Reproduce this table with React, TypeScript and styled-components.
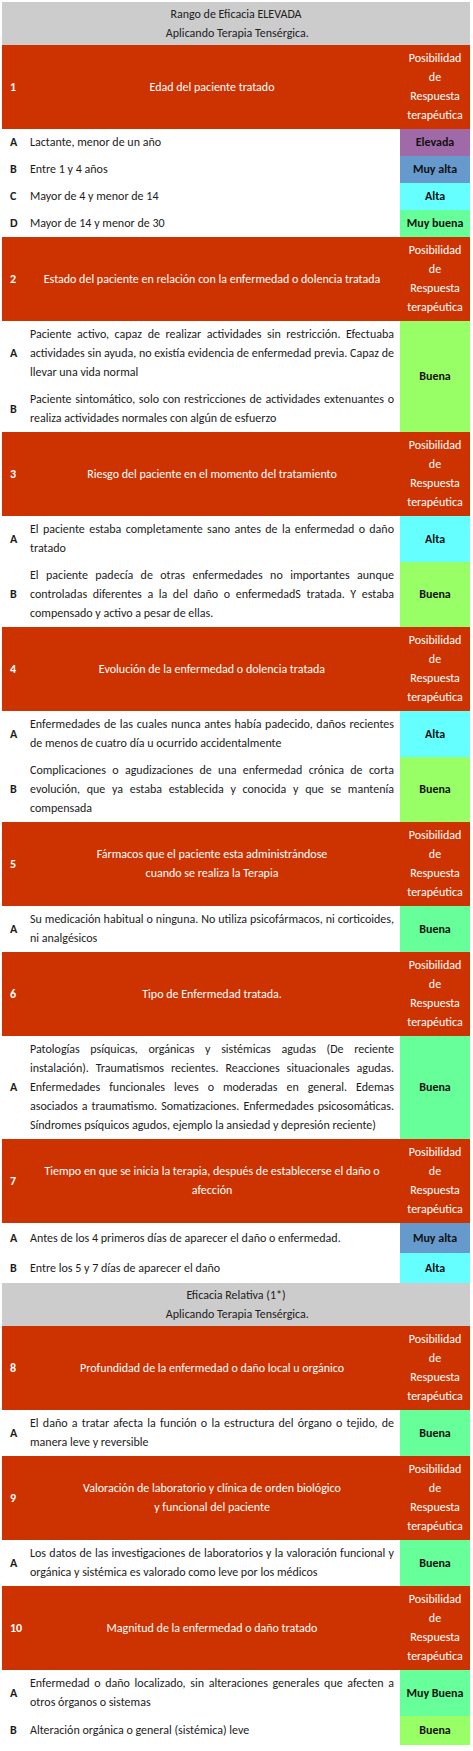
import React from 'react';
import styled, { createGlobalStyle } from 'styled-components';

const GlobalStyle = createGlobalStyle`
  html, body {
    margin: 0;
    padding: 0;
    background: #ffffff;
  }
  body {
    font-family: Carlito, Lato, "Noto Sans", sans-serif;
    font-size: 12px;
    color: #1c1c1c;
  }
`;

type Tone = 'purple' | 'blue' | 'cyan' | 'mint' | 'lime';

const toneColors: Record<Tone, string> = {
  purple: '#a06aa8',
  blue: '#6699cc',
  cyan: '#66ffff',
  mint: '#66ff99',
  lime: '#99ff66',
};

type Rating = { label: string; tone: Tone; span?: number };
type Row = { letter: string; lines: string[]; rating?: Rating; h?: number };
type Block =
  | { kind: 'band'; lines: string[] }
  | { kind: 'group'; num: string; title: string[]; rows: Row[] };

const blocks: Block[] = [
  { kind: 'band', lines: ['Rango de Eficacia ELEVADA', '\u00a0Aplicando Terapia Tensérgica.'] },
  {
    kind: 'group',
    num: '1',
    title: ['Edad del paciente tratado'],
    rows: [
      { letter: 'A', lines: ['Lactante, menor de un año'], rating: { label: 'Elevada', tone: 'purple' } },
      { letter: 'B', lines: ['Entre 1 y 4 años'], rating: { label: 'Muy alta', tone: 'blue' } },
      { letter: 'C', lines: ['Mayor de 4 y menor de 14'], rating: { label: 'Alta', tone: 'cyan' } },
      { letter: 'D', lines: ['Mayor de 14 y menor de 30'], rating: { label: 'Muy buena', tone: 'mint' } },
    ],
  },
  {
    kind: 'group',
    num: '2',
    title: ['Estado del paciente en relación con la enfermedad o dolencia tratada'],
    rows: [
      {
        letter: 'A',
        lines: [
          'Paciente activo, capaz de realizar actividades sin restricción. Efectuaba',
          'actividades sin ayuda, no existía evidencia de enfermedad previa. Capaz de',
          'llevar una vida normal',
        ],
        rating: { label: 'Buena', tone: 'lime', span: 2 },
      },
      {
        letter: 'B',
        lines: [
          'Paciente sintomático, solo con  restricciones de actividades extenuantes o',
          'realiza actividades normales con algún de esfuerzo',
        ],
      },
    ],
  },
  {
    kind: 'group',
    num: '3',
    title: ['Riesgo del paciente en el momento del tratamiento'],
    rows: [
      {
        letter: 'A',
        lines: ['El paciente estaba completamente sano antes de la enfermedad o daño', 'tratado'],
        rating: { label: 'Alta', tone: 'cyan' },
      },
      {
        letter: 'B',
        lines: [
          'El paciente padecía de otras enfermedades no importantes aunque',
          'controladas diferentes a la del daño o enfermedadS tratada. Y estaba',
          'compensado y activo a pesar de ellas.',
        ],
        rating: { label: 'Buena', tone: 'lime' },
      },
    ],
  },
  {
    kind: 'group',
    num: '4',
    title: ['Evolución de la enfermedad o dolencia tratada'],
    rows: [
      {
        letter: 'A',
        lines: [
          'Enfermedades de las cuales nunca antes había padecido, daños recientes',
          'de menos de cuatro día u ocurrido accidentalmente',
        ],
        rating: { label: 'Alta', tone: 'cyan' },
      },
      {
        letter: 'B',
        lines: [
          'Complicaciones o agudizaciones de una enfermedad crónica de corta',
          'evolución, que ya estaba establecida y conocida y que se mantenía',
          'compensada',
        ],
        rating: { label: 'Buena', tone: 'lime' },
      },
    ],
  },
  {
    kind: 'group',
    num: '5',
    title: ['Fármacos  que el paciente esta administrándose', 'cuando se realiza la Terapia'],
    rows: [
      {
        letter: 'A',
        lines: [
          'Su medicación habitual o ninguna. No utiliza psicofármacos, ni corticoides,',
          'ni analgésicos',
        ],
        rating: { label: 'Buena', tone: 'mint' },
      },
    ],
  },
  {
    kind: 'group',
    num: '6',
    title: ['Tipo de Enfermedad tratada.'],
    rows: [
      {
        letter: 'A',
        lines: [
          'Patologías psíquicas, orgánicas y sistémicas agudas (De reciente',
          'instalación). Traumatismos recientes.  Reacciones situacionales agudas.',
          'Enfermedades funcionales leves o moderadas en general. Edemas',
          'asociados a traumatismo. Somatizaciones. Enfermedades psicosomáticas.',
          'Síndromes psíquicos agudos, ejemplo la ansiedad y depresión reciente)',
        ],
        rating: { label: 'Buena', tone: 'mint' },
      },
    ],
  },
  {
    kind: 'group',
    num: '7',
    title: ['Tiempo en que se inicia la terapia, después de establecerse el daño o', 'afección'],
    rows: [
      {
        letter: 'A',
        lines: ['Antes de los 4 primeros días de aparecer el daño o enfermedad.'],
        rating: { label: 'Muy alta', tone: 'blue' },
        h: 30,
      },
      {
        letter: 'B',
        lines: ['Entre los 5 y 7 días de aparecer el daño'],
        rating: { label: 'Alta', tone: 'cyan' },
        h: 30,
      },
    ],
  },
  { kind: 'band', lines: ['Eficacia Relativa (1*)', '\u00a0Aplicando Terapia Tensérgica.'] },
  {
    kind: 'group',
    num: '8',
    title: ['Profundidad de la enfermedad o daño local u orgánico'],
    rows: [
      {
        letter: 'A',
        lines: [
          'El daño a tratar afecta la función o la estructura del órgano o tejido, de',
          'manera leve y reversible',
        ],
        rating: { label: 'Buena', tone: 'mint' },
      },
    ],
  },
  {
    kind: 'group',
    num: '9',
    title: ['Valoración de laboratorio y clínica de orden biológico', 'y funcional del paciente'],
    rows: [
      {
        letter: 'A',
        lines: [
          'Los datos de las investigaciones de laboratorios y la valoración funcional y',
          'orgánica y sistémica es valorado como leve por los médicos',
        ],
        rating: { label: 'Buena', tone: 'mint' },
      },
    ],
  },
  {
    kind: 'group',
    num: '10',
    title: ['Magnitud de la enfermedad o daño tratado'],
    rows: [
      {
        letter: 'A',
        lines: [
          'Enfermedad o daño localizado, sin alteraciones generales que afecten a',
          'otros órganos o sistemas',
        ],
        rating: { label: 'Muy Buena', tone: 'mint' },
      },
      {
        letter: 'B',
        lines: ['Alteración orgánica o general (sistémica) leve'],
        rating: { label: 'Buena', tone: 'lime' },
        h: 29,
      },
    ],
  },
];

const Page = styled.div`
  padding: 2px 3px 4px 2px;
`;

const Table = styled.table`
  width: 468px;
  table-layout: fixed;
  border-collapse: collapse;
  border-spacing: 0;
  line-height: 19px;
`;

const Col = styled.col<{ $w: number }>`
  width: ${(p) => p.$w}px;
`;

const BandCell = styled.td`
  background: #cccccc;
  color: #222222;
  text-align: center;
  padding: 3px 0 2px;
`;

const HeadRow = styled.tr`
  background: #cc3300;
  color: #ffffff;
`;

const HeadNum = styled.td`
  padding: 4px 0 4px 8px;
  font-weight: 700;
  vertical-align: middle;
`;

const HeadTitle = styled.td`
  padding: 4px 8px 4px 4px;
  text-align: center;
  vertical-align: middle;
  font-weight: 500;
`;

const HeadRating = styled.td`
  padding: 4px 0;
  text-align: center;
  vertical-align: middle;
  font-weight: 500;
`;

const Word = styled.span`
  display: block;
  white-space: nowrap;
`;

const DataRow = styled.tr<{ $h?: number }>`
  background: #ffffff;
  ${(p) => (p.$h ? `height: ${p.$h}px;` : '')}
`;

const LetterCell = styled.td`
  padding: 4px 0 4px 8px;
  font-weight: 700;
  vertical-align: middle;
`;

const TextCell = styled.td`
  padding: 4px 6px 4px 2px;
  vertical-align: middle;
`;

const Line = styled.span<{ $justify: boolean }>`
  display: block;
  white-space: ${(p) => (p.$justify ? 'nowrap' : 'pre')};
  text-align: ${(p) => (p.$justify ? 'justify' : 'left')};
  text-align-last: ${(p) => (p.$justify ? 'justify' : 'left')};
`;

const RatingCell = styled.td<{ $tone: Tone }>`
  background: ${(p) => toneColors[p.$tone]};
  color: #111111;
  text-align: center;
  vertical-align: middle;
  font-weight: 600;
  padding: 4px 0;
  white-space: nowrap;
`;

const Band: React.FC<{ lines: string[] }> = ({ lines }) => (
  <tr>
    <BandCell colSpan={3}>
      {lines.map((l) => (
        <Word key={l}>{l}</Word>
      ))}
    </BandCell>
  </tr>
);

const Group: React.FC<{ num: string; title: string[]; rows: Row[] }> = ({ num, title, rows }) => (
  <>
    <HeadRow>
      <HeadNum>{num}</HeadNum>
      <HeadTitle>
        {title.map((t) => (
          <Word key={t}>{t}</Word>
        ))}
      </HeadTitle>
      <HeadRating>
        {['Posibilidad', 'de', 'Respuesta', 'terapéutica'].map((w) => (
          <Word key={w}>{w}</Word>
        ))}
      </HeadRating>
    </HeadRow>
    {rows.map((r) => (
      <DataRow key={r.letter} $h={r.h}>
        <LetterCell>{r.letter}</LetterCell>
        <TextCell>
          {r.lines.map((l, i) => (
            <Line key={i} $justify={r.lines.length > 1 && i < r.lines.length - 1}>
              {l}
            </Line>
          ))}
        </TextCell>
        {r.rating && (
          <RatingCell $tone={r.rating.tone} rowSpan={r.rating.span ?? 1}>
            {r.rating.label}
          </RatingCell>
        )}
      </DataRow>
    ))}
  </>
);

const App: React.FC = () => (
  <>
    <GlobalStyle />
    <Page>
      <Table>
        <colgroup>
          <Col $w={26} />
          <Col $w={372} />
          <Col $w={70} />
        </colgroup>
        <tbody>
          {blocks.map((b, i) =>
            b.kind === 'band' ? (
              <Band key={i} lines={b.lines} />
            ) : (
              <Group key={i} num={b.num} title={b.title} rows={b.rows} />
            ),
          )}
        </tbody>
      </Table>
    </Page>
  </>
);

export default App;
